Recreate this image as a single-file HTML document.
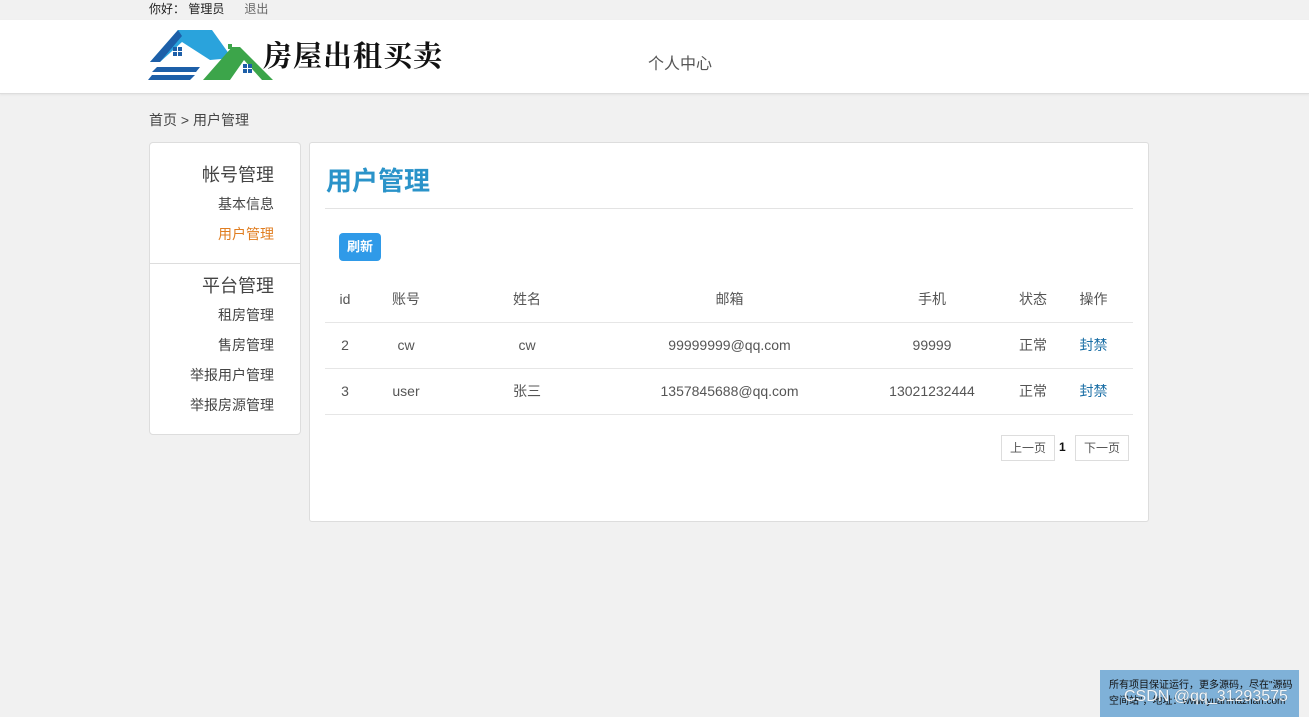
<!DOCTYPE html>
<html><head><meta charset="utf-8"><style>
*{margin:0;padding:0;box-sizing:border-box}
body{width:1309px;height:717px;background:#f1f1f1;font-family:"Liberation Sans","Noto Sans CJK SC",sans-serif;color:#333;position:relative;overflow:hidden;font-size:14px}
.top{height:20px;font-size:12px;line-height:19px;padding-left:149px;color:#222}
.top span{margin-right:20px}
.hdr{position:absolute;top:20px;left:0;width:1309px;height:74px;background:#fff;border-bottom:1px solid #ddd;box-shadow:0 1px 2px #e4e4e4}
.logo{position:absolute;left:148px;top:8px}
.ltext{position:absolute;left:263px;top:14px;font-family:"Noto Serif CJK SC",serif;font-size:29px;font-weight:bold;color:#111;letter-spacing:1px}
.nav{position:absolute;left:648px;top:30px;font-size:16px;color:#555}
.bc{position:absolute;left:149px;top:110px;font-size:14px;color:#444}
.side{position:absolute;left:149px;top:142px;width:152px;height:293px;background:#fff;border:1px solid #ddd;border-radius:4px}
.side .h{position:absolute;right:26px;font-size:18px;color:#444}
.side .i{position:absolute;right:26px;font-size:14px;color:#444}
.main{position:absolute;left:309px;top:142px;width:840px;height:380px;background:#fff;border:1px solid #ddd;border-radius:3px}
.title{position:absolute;left:16px;top:18px;font-size:26px;font-weight:bold;color:#2a93c9}
.hr{position:absolute;left:15px;top:65px;width:808px;border-top:1px solid #e3e3e3}
.btn{position:absolute;left:29px;top:90px;width:42px;height:28px;background:#2f9ae8;border-radius:4px;color:#fff;font-size:13px;font-weight:bold;line-height:27px;text-align:center}
table{position:absolute;left:15px;top:133px;width:808px;border-collapse:collapse;font-size:14px;color:#555}
td{height:46px;text-align:center;border-bottom:1px solid #e6e6e6}
a{color:#1b6fa6;text-decoration:none}
.pg{position:absolute;top:292px;height:26px;border:1px solid #ddd;font-size:12px;line-height:24px;text-align:center;color:#555}
.wm{position:absolute;left:1100px;top:670px;width:199px;height:47px;background:#7fb1d8;font-size:10px;color:#111;padding:8px 0 0 9px;line-height:16px}
.wm b{position:absolute;left:24px;top:19px;font-size:16px;font-weight:normal;color:#fff;opacity:.9;text-shadow:0 0 1px #555}
</style></head><body>
<div class="top"><span>你好： 管理员</span><span style="color:#666">退出</span></div>
<div class="hdr">
<svg class="logo" width="128" height="54" viewBox="0 0 128 54">
<polygon points="2,34 30,2 64,2 84,30 62,32 34,14 12,34" fill="#2aa3dc"/>
<polygon points="2,34 30,2 34,8 12,34" fill="#1d5fa8"/>
<rect x="25" y="19" width="9" height="9" fill="#1d5fa8"/>
<line x1="29.5" y1="19" x2="29.5" y2="28" stroke="#fff"/><line x1="25" y1="23.5" x2="34" y2="23.5" stroke="#fff"/>
<polygon points="9,39 52,39 48,44 4,44" fill="#1d5fa8"/>
<polygon points="4,47 47,47 42,52 0,52" fill="#1d5fa8"/>
<polygon points="55,52 84,19 92,19 125,52 114,52 96,32 82,52" fill="#3ca54a"/>
<rect x="80" y="16" width="4" height="5" fill="#3ca54a"/>
<rect x="95" y="36" width="9" height="9" fill="#1d5fa8"/>
<line x1="99.5" y1="36" x2="99.5" y2="45" stroke="#fff"/><line x1="95" y1="40.5" x2="104" y2="40.5" stroke="#fff"/>
</svg>
<div class="ltext">房屋出租买卖</div>
<div class="nav">个人中心</div>
</div>
<div class="bc">首页 &gt; 用户管理</div>
<div class="side">
<div class="h" style="top:18px">帐号管理</div>
<div class="i" style="top:51px">基本信息</div>
<div class="i" style="top:81px;color:#e07d20">用户管理</div>
<div style="position:absolute;left:0;right:0;top:120px;border-top:1px solid #ddd"></div>
<div class="h" style="top:129px">平台管理</div>
<div class="i" style="top:162px">租房管理</div>
<div class="i" style="top:192px">售房管理</div>
<div class="i" style="top:222px">举报用户管理</div>
<div class="i" style="top:252px">举报房源管理</div>
</div>
<div class="main">
<div class="title">用户管理</div>
<div class="hr"></div>
<div class="btn">刷新</div>
<table>
<tr><td style="width:40px">id</td><td style="width:82px">账号</td><td style="width:160px">姓名</td><td style="width:245px">邮箱</td><td style="width:160px">手机</td><td style="width:42px">状态</td><td>操作</td></tr>
<tr><td>2</td><td>cw</td><td>cw</td><td>99999999@qq.com</td><td>99999</td><td>正常</td><td><a>封禁</a></td></tr>
<tr><td>3</td><td>user</td><td>张三</td><td>1357845688@qq.com</td><td>13021232444</td><td>正常</td><td><a>封禁</a></td></tr>
</table>
<div class="pg" style="left:691px;width:54px">上一页</div>
<div style="position:absolute;left:749px;top:297px;font-size:12px;font-weight:bold;color:#111">1</div>
<div class="pg" style="left:765px;width:54px">下一页</div>
</div>
<div class="wm">所有项目保证运行，更多源码，尽在"源码<br>空间站"，地址：www.yuanmazhan.com<b>CSDN @qq_31293575</b></div>
</body></html>
